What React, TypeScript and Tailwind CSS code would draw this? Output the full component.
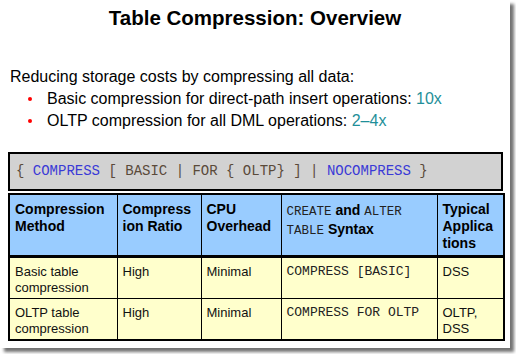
import React from 'react';

const sans = "font-['Arial','Liberation_Sans',sans-serif]";
const mono = "font-['Courier_New','Liberation_Mono',monospace]";

function Bullet({ children }: { children: React.ReactNode }) {
  return (
    <div className="flex items-center h-[22px]">
      <span className="w-[37px] pl-[18px] flex">
        <span className="w-[4px] h-[4px] rounded-full bg-[#ff0000]" />
      </span>
      <span>{children}</span>
    </div>
  );
}

export default function App() {
  const th = 'border border-black align-top text-left font-bold text-[14px] leading-[17px] px-[5px] pt-[6px] text-black';
  const td = 'border border-black align-top text-[13px] leading-[16px] px-[5px] pt-[6px] text-[#111]';

  return (
    <div className={`w-[516px] h-[354px] bg-white ${sans}`}>
      <div className="w-[510px] h-[348px] bg-white shadow-[4px_4px_3px_rgba(0,0,0,0.55)] flex flex-col">
        {/* title */}
        <h1 className="pt-[5px] h-[31px] text-center text-[20.5px] leading-[26px] font-bold text-black">
          Table Compression: Overview
        </h1>

        {/* intro + bullets */}
        <div className="mt-[35px] pl-[10px] text-[16px] leading-[22px] text-black">
          <p>Reducing storage costs by compressing all data:</p>
          <Bullet>
            Basic compression for direct-path insert operations:{' '}
            <span className="text-[#1f8f99]">10x</span>
          </Bullet>
          <Bullet>
            OLTP compression for all DML operations: <span className="text-[#1f8f99]">2–4x</span>
          </Bullet>
        </div>

        {/* syntax box */}
        <div className="mt-[20px] mx-[8px] w-[495px] h-[39px] border-2 border-black bg-[#d2d2d2] flex items-center pl-[6px]">
          <span className={`${mono} text-[14px] text-[#5a4a3a] whitespace-pre`}>
            {'{ '}
            <span className="text-[#3a3ad6]">COMPRESS</span>
            {' [ BASIC | FOR { OLTP} ] | '}
            <span className="text-[#3a3ad6]">NOCOMPRESS</span>
            {' }'}
          </span>
        </div>

        {/* table */}
        <table className="mt-[2px] ml-[8px] w-[495px] border-collapse border-2 border-black table-fixed">
          <colgroup>
            <col className="w-[108px]" />
            <col className="w-[84px]" />
            <col className="w-[80px]" />
            <col className="w-[156px]" />
            <col className="w-[67px]" />
          </colgroup>
          <thead>
            <tr className="h-[62px] bg-[#99ccff] border-b-[3px] border-black">
              <th className={th}>Compression Method</th>
              <th className={th}>
                Compress
                <br />
                ion Ratio
              </th>
              <th className={th}>CPU Overhead</th>
              <th className={`${th} pt-[7px]`}>
                <span className={`${mono} font-normal text-[12.5px] text-[#222]`}>CREATE</span> and{' '}
                <span className={`${mono} font-normal text-[12.5px] text-[#222]`}>ALTER</span>
                <br />
                <span className={`${mono} font-normal text-[12.5px] text-[#222]`}>TABLE</span> Syntax
              </th>
              <th className={th}>
                Typical
                <br />
                Applica
                <br />
                tions
              </th>
            </tr>
          </thead>
          <tbody className="bg-[#ffffcc]">
            <tr className="h-[42px]">
              <td className={td}>
                Basic table
                <br />
                compression
              </td>
              <td className={td}>High</td>
              <td className={td}>Minimal</td>
              <td className={`${td} ${mono} text-[12.5px] text-[#222]`}>COMPRESS [BASIC]</td>
              <td className={td}>DSS</td>
            </tr>
            <tr className="h-[42px]">
              <td className={td}>
                OLTP table
                <br />
                compression
              </td>
              <td className={td}>High</td>
              <td className={td}>Minimal</td>
              <td className={`${td} ${mono} text-[12.5px] text-[#222]`}>COMPRESS FOR OLTP</td>
              <td className={td}>
                OLTP,
                <br />
                DSS
              </td>
            </tr>
          </tbody>
        </table>
      </div>
    </div>
  );
}
